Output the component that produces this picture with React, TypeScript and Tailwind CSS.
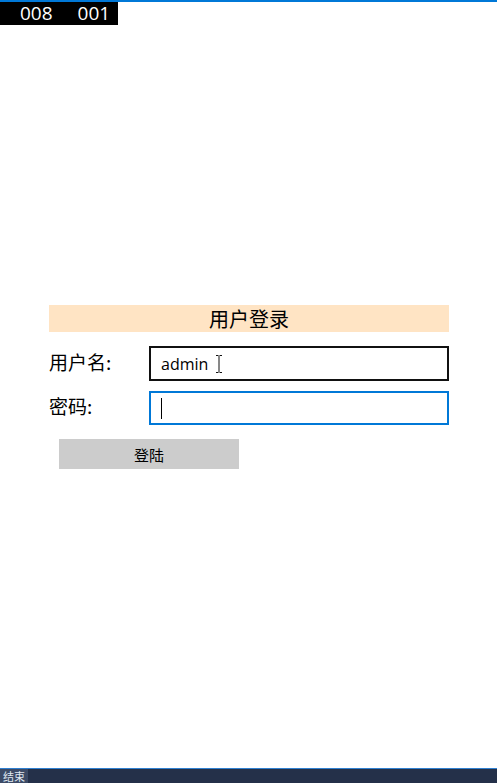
import React from 'react';

const cjk = '"Noto Sans CJK SC", "Open Sans", sans-serif';

function IBeam() {
  return (
    <svg width="8" height="18" viewBox="0 0 8 18" className="shrink-0">
      <path d="M1 0.5h2.5M4.5 0.5H7M4 1v16M1 17.5h2.5M4.5 17.5H7" stroke="#111" strokeWidth="1" fill="none" />
    </svg>
  );
}

export default function App() {
  return (
    <div className="flex h-[783px] w-full flex-col bg-white" style={{ fontFamily: cjk }}>
      {/* top strip */}
      <div className="h-[2px] w-full bg-[#0078d7]" />
      <div
        className="flex h-[23px] w-[118px] items-center bg-black text-[19px] font-medium leading-none text-white"
        style={{ fontFamily: '"Open Sans", sans-serif' }}
      >
        <span className="ml-[20px]">008</span>
        <span className="ml-[25px]">001</span>
      </div>

      {/* login form */}
      <div className="ml-[49px] mt-[280px] flex w-[400px] flex-col">
        <div className="flex h-[27px] items-center justify-center bg-[#ffe4c4] text-[20px] leading-none text-black">
          用户登录
        </div>

        <div className="mt-[14px] flex items-center">
          <span className="w-[100px] pb-[5px] text-[19px] leading-none text-black">用户名:</span>
          <div className="flex h-[35px] flex-1 items-center border-2 border-[#111] pl-[10px]">
            <span className="text-[16px] leading-none text-black" style={{ fontFamily: '"Open Sans", sans-serif' }}>
              admin
            </span>
            <span className="ml-[7px] flex items-center">
              <IBeam />
            </span>
          </div>
        </div>

        <div className="mt-[10px] flex items-center">
          <span className="w-[100px] pb-[5px] text-[19px] leading-none text-black">密码:</span>
          <div className="flex h-[34px] flex-1 items-center border-2 border-[#0078d7] pl-[10px]">
            <span className="h-[21px] w-px bg-black" />
          </div>
        </div>

        <button className="ml-[10px] mt-[14px] flex h-[30px] w-[180px] items-center justify-center bg-[#cccccc] text-[15px] leading-none text-black">
          登陆
        </button>
      </div>

      {/* bottom taskbar */}
      <div className="mt-auto flex h-[15px] w-full border-t border-[#2f7fd0] bg-[#243049]">
        <div className="flex h-full w-[28px] items-center justify-center bg-[#3c4a66]">
          <span className="text-[11px] leading-[14px] text-[#dfe6f0]">结束</span>
        </div>
      </div>
    </div>
  );
}
